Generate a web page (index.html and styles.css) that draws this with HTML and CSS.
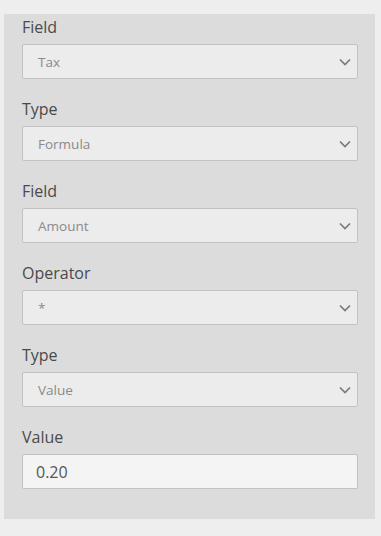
FILE: index.html
```html
<!DOCTYPE html>
<html>
<head>
<meta charset="utf-8">
<link rel="stylesheet" href="styles.css">
</head>
<body>
<div class="panel">
  <div class="group">
    <div class="label">Field</div>
    <div class="select"><span>Tax</span><svg class="chev" width="12" height="8" viewBox="0 0 12 8"><path d="M1 1.5 L6 6.5 L11 1.5" fill="none" stroke="#7a7a7a" stroke-width="1.7"/></svg></div>
  </div>
  <div class="group">
    <div class="label">Type</div>
    <div class="select"><span>Formula</span><svg class="chev" width="12" height="8" viewBox="0 0 12 8"><path d="M1 1.5 L6 6.5 L11 1.5" fill="none" stroke="#7a7a7a" stroke-width="1.7"/></svg></div>
  </div>
  <div class="group">
    <div class="label">Field</div>
    <div class="select"><span>Amount</span><svg class="chev" width="12" height="8" viewBox="0 0 12 8"><path d="M1 1.5 L6 6.5 L11 1.5" fill="none" stroke="#7a7a7a" stroke-width="1.7"/></svg></div>
  </div>
  <div class="group">
    <div class="label">Operator</div>
    <div class="select"><span>*</span><svg class="chev" width="12" height="8" viewBox="0 0 12 8"><path d="M1 1.5 L6 6.5 L11 1.5" fill="none" stroke="#7a7a7a" stroke-width="1.7"/></svg></div>
  </div>
  <div class="group">
    <div class="label">Type</div>
    <div class="select"><span>Value</span><svg class="chev" width="12" height="8" viewBox="0 0 12 8"><path d="M1 1.5 L6 6.5 L11 1.5" fill="none" stroke="#7a7a7a" stroke-width="1.7"/></svg></div>
  </div>
  <div class="group">
    <div class="label">Value</div>
    <div class="input">0.20</div>
  </div>
</div>
</body>
</html>
```
FILE: styles.css
```css
html, body {
  margin: 0;
  padding: 0;
  background: #eeeeee;
}
body {
  padding: 14px 6px 17px 4px;
  font-family: "Open Sans", "Noto Sans", sans-serif;
}
.panel {
  background: #dcdcdc;
  padding: 0 17px 30px 18px;
  display: flex;
  flex-direction: column;
  gap: 17px;
}
.group {
  display: flex;
  flex-direction: column;
}
.label {
  font-size: 16px;
  line-height: 26px;
  color: #4a4a4a;
  margin-bottom: 4px;
}
.select, .input {
  box-sizing: border-box;
  height: 35px;
  border: 1px solid #c2c2c2;
  border-radius: 2px;
  display: flex;
  align-items: center;
  padding: 0 6px 0 15px;
}
.select {
  background: #ececec;
  justify-content: space-between;
  font-size: 13.5px;
  color: #8a8a8a;
}
.input {
  background: #f4f4f4;
  font-size: 16px;
  color: #555;
  padding-left: 13px;
}
```
